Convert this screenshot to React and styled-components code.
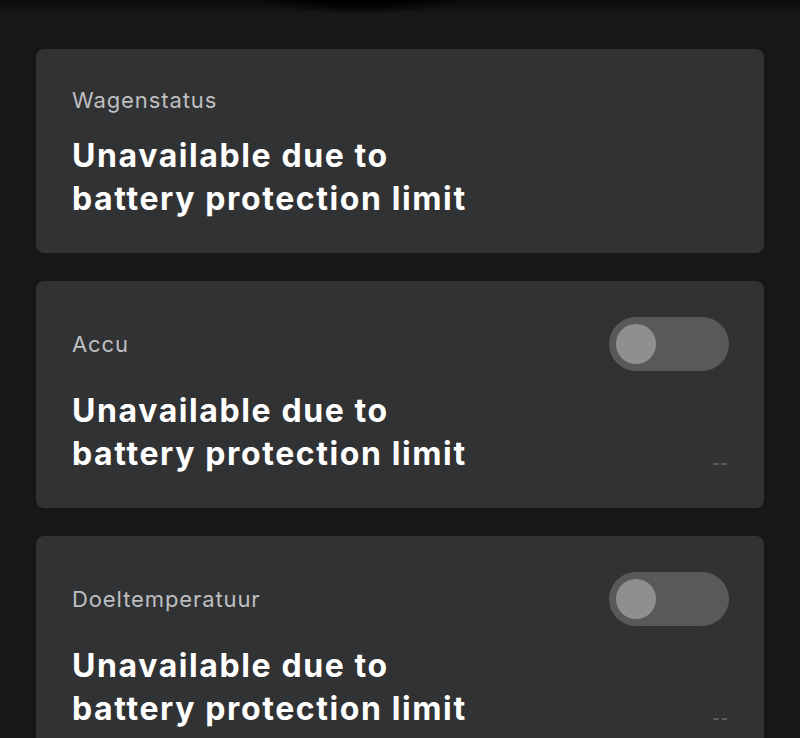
import React from "react";
import styled, { createGlobalStyle } from "styled-components";

const Global = createGlobalStyle`
  html, body { margin: 0; padding: 0; background: #161719; }
  body { font-family: Inter, "Noto Sans", sans-serif; }
`;

const Page = styled.div`
  position: relative;
  min-height: 738px;
  height: 738px;
  overflow: hidden;
  box-sizing: border-box;
  padding: 49px 36px 0;
  display: flex;
  flex-direction: column;
  gap: 28px;
  background: #161719;
  &::before {
    content: "";
    position: absolute;
    left: 0; right: 0; top: 0; height: 14px;
    background: linear-gradient(#0a0a0b, rgba(22,23,25,0));
  }
  &::after {
    content: "";
    position: absolute;
    left: 250px; top: -20px; width: 220px; height: 34px;
    border-radius: 50%;
    background: radial-gradient(ellipse at center, rgba(0,0,0,0.95) 30%, rgba(0,0,0,0) 70%);
  }
`;

const Card = styled.section`
  flex-shrink: 0;
  background: #313234;
  border-radius: 8px;
  padding: 35px 35px 33px 36px;
`;

const Header = styled.div`
  display: flex;
  align-items: center;
  justify-content: space-between;
  min-height: ${(p) => (p.$toggle ? "55px" : "32px")};
`;

const Label = styled.div`
  font-size: 22px;
  line-height: 30px;
  color: #bfbfc1;
  letter-spacing: 0.9px;
`;

const Body = styled.div`
  display: flex;
  align-items: flex-end;
  justify-content: space-between;
  margin-top: 18px;
`;

const Title = styled.div`
  font-size: 32px;
  line-height: 43px;
  font-weight: 700;
  color: #ffffff;
  letter-spacing: 1.6px;
`;

const Dash = styled.div`
  font-size: 16px;
  color: #5f5f61;
  margin-bottom: 2px;
  letter-spacing: 1px;
  font-weight: 700;
`;

const Track = styled.div`
  width: 120px;
  height: 54px;
  border-radius: 27px;
  background: #59595b;
  box-sizing: border-box;
  padding: 7px;
  display: flex;
  align-items: center;
`;

const Knob = styled.div`
  width: 40px;
  height: 40px;
  border-radius: 50%;
  background: #8f8f91;
`;

const Toggle = () => (
  <Track>
    <Knob />
  </Track>
);

const StatusCard = ({ label, toggle }) => (
  <Card>
    <Header $toggle={toggle}>
      <Label>{label}</Label>
      {toggle && <Toggle />}
    </Header>
    <Body>
      <Title>
        Unavailable due to
        <br />
        battery protection limit
      </Title>
      {toggle && <Dash>--</Dash>}
    </Body>
  </Card>
);

export default function App() {
  return (
    <>
      <Global />
      <Page>
        <StatusCard label="Wagenstatus" />
        <StatusCard label="Accu" toggle />
        <StatusCard label="Doeltemperatuur" toggle />
      </Page>
    </>
  );
}
